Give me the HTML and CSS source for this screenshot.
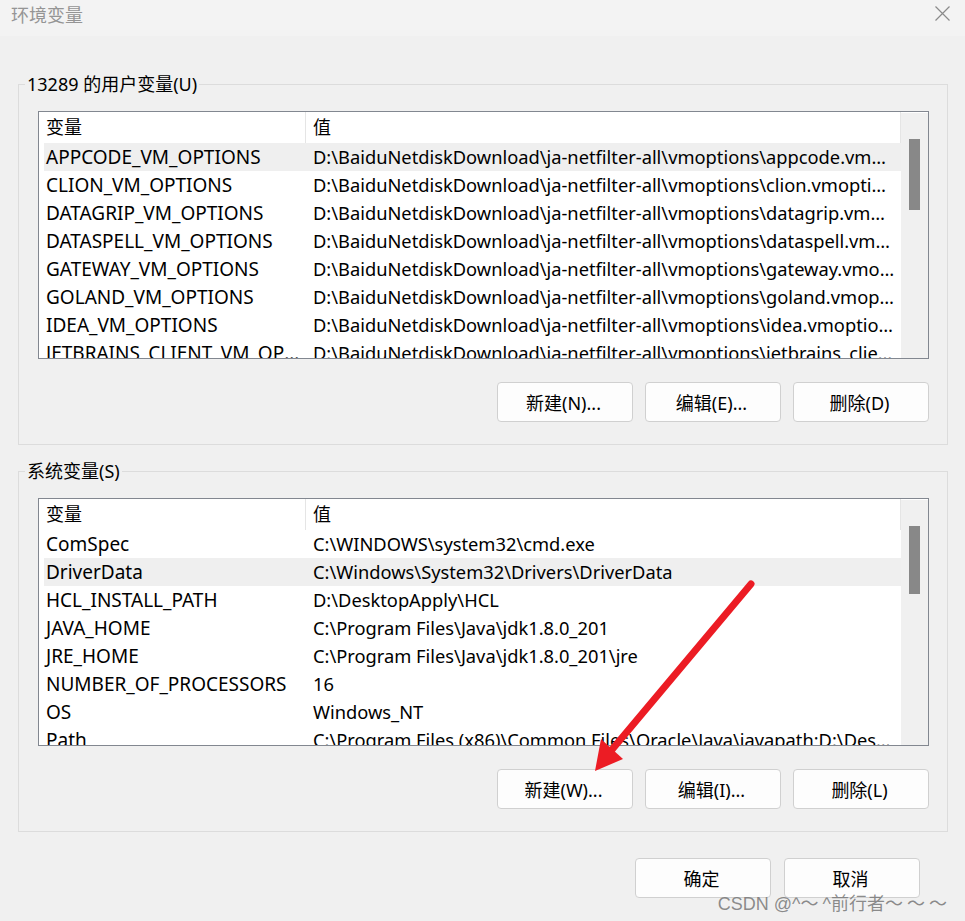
FILE: index.html
```html
<!DOCTYPE html>
<html lang="zh-CN">
<head>
<meta charset="utf-8">
<title>环境变量</title>
<link rel="stylesheet" href="styles.css">
</head>
<body>
<div class="titlebar">
  <div class="title">环境变量</div>
  <svg class="close" width="15" height="15" viewBox="0 0 15 15"><path d="M0.5 0.5 L14.5 14.5 M14.5 0.5 L0.5 14.5" stroke="#8a8a8a" stroke-width="1.2" fill="none"/></svg>
</div>
<div class="content">
  <fieldset class="group">
    <legend>13289 的用户变量(U)</legend>
    <div class="list">
      <div class="list-main">
        <div class="lhead"><div class="hc1">变量</div><div class="hc2">值</div></div>
        <div class="row sel"><div class="c1">APPCODE_VM_OPTIONS</div><div class="c2">D:\BaiduNetdiskDownload\ja-netfilter-all\vmoptions\appcode.vmoptions</div></div>
        <div class="row"><div class="c1">CLION_VM_OPTIONS</div><div class="c2">D:\BaiduNetdiskDownload\ja-netfilter-all\vmoptions\clion.vmoptions</div></div>
        <div class="row"><div class="c1">DATAGRIP_VM_OPTIONS</div><div class="c2">D:\BaiduNetdiskDownload\ja-netfilter-all\vmoptions\datagrip.vmoptions</div></div>
        <div class="row"><div class="c1">DATASPELL_VM_OPTIONS</div><div class="c2">D:\BaiduNetdiskDownload\ja-netfilter-all\vmoptions\dataspell.vmoptions</div></div>
        <div class="row"><div class="c1">GATEWAY_VM_OPTIONS</div><div class="c2">D:\BaiduNetdiskDownload\ja-netfilter-all\vmoptions\gateway.vmoptions</div></div>
        <div class="row"><div class="c1">GOLAND_VM_OPTIONS</div><div class="c2">D:\BaiduNetdiskDownload\ja-netfilter-all\vmoptions\goland.vmoptions</div></div>
        <div class="row"><div class="c1">IDEA_VM_OPTIONS</div><div class="c2">D:\BaiduNetdiskDownload\ja-netfilter-all\vmoptions\idea.vmoptions</div></div>
        <div class="row"><div class="c1">JETBRAINS_CLIENT_VM_OPTIONS</div><div class="c2">D:\BaiduNetdiskDownload\ja-netfilter-all\vmoptions\jetbrains_client.vmoptions</div></div>
      </div>
      <div class="scroll"><div class="thumb t1"></div></div>
    </div>
    <div class="btns">
      <button class="btn">新建(N)...</button>
      <button class="btn">编辑(E)...</button>
      <button class="btn">删除(D)</button>
    </div>
  </fieldset>

  <fieldset class="group g2">
    <legend>系统变量(S)</legend>
    <div class="list">
      <div class="list-main">
        <div class="lhead"><div class="hc1">变量</div><div class="hc2">值</div></div>
        <div class="row"><div class="c1">ComSpec</div><div class="c2">C:\WINDOWS\system32\cmd.exe</div></div>
        <div class="row sel"><div class="c1">DriverData</div><div class="c2">C:\Windows\System32\Drivers\DriverData</div></div>
        <div class="row"><div class="c1">HCL_INSTALL_PATH</div><div class="c2">D:\DesktopApply\HCL</div></div>
        <div class="row"><div class="c1">JAVA_HOME</div><div class="c2">C:\Program Files\Java\jdk1.8.0_201</div></div>
        <div class="row"><div class="c1">JRE_HOME</div><div class="c2">C:\Program Files\Java\jdk1.8.0_201\jre</div></div>
        <div class="row"><div class="c1">NUMBER_OF_PROCESSORS</div><div class="c2">16</div></div>
        <div class="row"><div class="c1">OS</div><div class="c2">Windows_NT</div></div>
        <div class="row"><div class="c1">Path</div><div class="c2">C:\Program Files (x86)\Common Files\Oracle\Java\javapath;D:\DesktopApply\bin</div></div>
      </div>
      <div class="scroll"><div class="thumb t2"></div></div>
    </div>
    <div class="btns">
      <button class="btn">新建(W)...</button>
      <button class="btn">编辑(I)...</button>
      <button class="btn">删除(L)</button>
    </div>
  </fieldset>

  <div class="footer">
    <button class="btn">确定</button>
    <button class="btn">取消</button>
  </div>
</div>

<svg class="annot" width="965" height="921" viewBox="0 0 965 921">
  <line x1="751" y1="584" x2="610" y2="752" stroke="#ec1c24" stroke-width="7" stroke-linecap="round"/>
  <polygon points="595,771 601,739 623,759" fill="#ec1c24"/>
</svg>
<div class="watermark">CSDN @^<span class="fw">～</span>^前行者<span class="fw">～～～</span></div>
</body>
</html>
```

FILE: styles.css
```css
* { box-sizing: border-box; }
html, body { margin: 0; padding: 0; }
body {
  width: 965px;
  height: 921px;
  background: #f0f0f0;
  font-family: "Noto Sans", "Noto Sans CJK SC", sans-serif;
  color: #000;
  position: relative;
  overflow: hidden;
}
.titlebar {
  height: 36px;
  background: #f3f3f3;
  display: flex;
  justify-content: space-between;
  align-items: flex-start;
  padding: 2px 15px 0 11px;
}
.title {
  font-family: "Noto Sans CJK SC", sans-serif;
  font-size: 18px;
  line-height: 24px;
  color: #959595;
}
.close { margin-top: 4px; }
.content { padding: 37px 0 0 18px; }
.group {
  margin: 0;
  width: 930px;
  border: 1px solid #dcdcdc;
  padding: 16px 18px 22px 19px;
  min-inline-size: 0;
}
.group legend {
  font-size: 18px;
  line-height: 22px;
  padding: 0 2px;
  margin-left: -13px;
}
.g2 { margin-top: 15px; }
.list {
  height: 248px;
  border: 1px solid #828790;
  background: #fff;
  display: flex;
  overflow: hidden;
}
.list-main { width: 862px; font-size: 19px; }
.lhead {
  height: 31px;
  display: flex;
  line-height: 31px;
  font-size: 18px;
}
.hc1 {
  width: 267px;
  padding-left: 7px;
  border-right: 1px solid #e5e5e5;
}
.hc2 {
  flex: 1;
  padding-left: 7px;
  border-right: 1px solid #e5e5e5;
}
.row {
  height: 28px;
  line-height: 28px;
  margin-left: 5px;
  display: flex;
  white-space: nowrap;
}
.row.sel { background: #efefef; }
.c1 {
  width: 262px;
  padding-left: 2px;
  padding-right: 4px;
  overflow: hidden;
  text-overflow: ellipsis;
}
.c2 {
  flex: 1;
  min-width: 0;
  padding-left: 7px;
  padding-right: 6px;
  font-size: 18.3px;
  overflow: hidden;
  text-overflow: ellipsis;
}
.scroll {
  width: 27px;
  background: #f0f0f0;
  border-top: 1px solid #fff;
  padding: 26px 0 0 8px;
}
.thumb { width: 11px; background: #888888; }
.t1 { height: 71px; }
.t2 { height: 68px; }
.btns {
  display: flex;
  justify-content: flex-end;
  gap: 12px;
  margin-top: 23px;
}
.btn {
  width: 136px;
  height: 40px;
  background: #fdfdfd;
  border: 1px solid #d0d0d0;
  border-radius: 4px;
  font-family: "Noto Sans", "Noto Sans CJK SC", sans-serif;
  font-size: 18px;
  color: #000;
  padding: 0 3px 0 0;
}
.footer {
  display: flex;
  justify-content: flex-end;
  gap: 13px;
  padding-right: 45px;
  margin-top: 26px;
}
.annot {
  position: absolute;
  left: 0;
  top: 0;
  pointer-events: none;
}
.watermark {
  position: absolute;
  right: 14px;
  top: 891px;
  font-family: "Liberation Sans", "Noto Sans CJK SC", sans-serif;
  font-size: 18px;
  line-height: 22px;
  color: rgba(120, 120, 120, 0.85);
  white-space: nowrap;
}
.watermark .fw {
  font-family: "Noto Sans CJK SC", sans-serif;
  letter-spacing: 4px;
}
```
